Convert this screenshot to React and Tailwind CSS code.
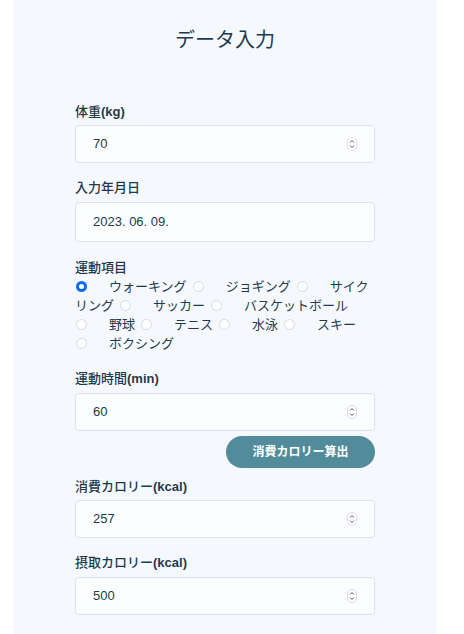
const sports = [
  "ウォーキング",
  "ジョギング",
  "サイクリング",
  "サッカー",
  "バスケットボール",
  "野球",
  "テニス",
  "水泳",
  "スキー",
  "ボクシング",
];

function Spinner() {
  return (
    <svg width="10" height="14" viewBox="0 0 10 14" className="shrink-0">
      <rect x="0.5" y="0.5" width="9" height="13" rx="4.5" fill="#fff" stroke="#d9dde2" />
      <path d="M3 5.5 L5 3.5 L7 5.5" fill="none" stroke="#555" strokeWidth="1" />
      <path d="M3 8.5 L5 10.5 L7 8.5" fill="none" stroke="#555" strokeWidth="1" />
    </svg>
  );
}

function Field({ value, spinner = true, h = "h-[38px]" }) {
  return (
    <div
      className={`flex items-center justify-between ${h} rounded-[4px] border border-[#dde3ea] bg-[#fcfdfe] pl-[17px] pr-[17px] text-[13px] text-[#223a4b]`}
    >
      <span>{value}</span>
      {spinner && <Spinner />}
    </div>
  );
}

function Label({ text, unit, className = "" }) {
  return (
    <div className={`text-[13px] leading-[19px] font-medium text-[#1f3a4c] ${className}`}>
      {text}
      {unit && <span className="font-bold">{unit}</span>}
    </div>
  );
}

export default function App() {
  return (
    <div
      className="min-h-[634px] bg-white"
      style={{ fontFamily: '"Liberation Sans", "Noto Sans CJK JP", sans-serif' }}
    >
      <div className="mx-[13px] w-[424px] min-h-[634px] bg-[#f5f9fe] px-[62px] pt-[26px]">
        <h1 className="text-center text-[20px] leading-[28px] text-[#1d3a4e]">データ入力</h1>

        <Label className="mt-[48px]" text="体重" unit="(kg)" />
        <div className="mt-[4px]">
          <Field value="70" />
        </div>

        <Label className="mt-[15px]" text="入力年月日" />
        <div className="mt-[5px]">
          <Field value="2023. 06. 09." spinner={false} h="h-[40px]" />
        </div>

        <Label className="mt-[16px]" text="運動項目" />
        <div className="text-[13px] leading-[19px] text-[#1f3a4c]">
          {sports.map((s, i) => (
            <span key={s}>
              <span
                className={`inline-block align-[-1px] ml-[1px] mr-[22px] h-[11px] w-[11px] rounded-full ${
                  i === 0
                    ? "border-[3px] border-[#0b6cf0] bg-white"
                    : "border border-[#d7dbe0] bg-white"
                }`}
              />
              {s}
              <span className="inline-block w-[5px]" />
            </span>
          ))}
        </div>

        <Label className="mt-[16px]" text="運動時間" unit="(min)" />
        <div className="mt-[5px]">
          <Field value="60" />
        </div>
        <div className="mt-[5px] flex justify-end">
          <button className="h-[32px] w-[149px] rounded-full bg-[#528c9a] text-[12px] font-bold text-white">
            消費カロリー算出
          </button>
        </div>

        <Label className="mt-[9px]" text="消費カロリー" unit="(kcal)" />
        <div className="mt-[4px]">
          <Field value="257" />
        </div>

        <Label className="mt-[15px]" text="摂取カロリー" unit="(kcal)" />
        <div className="mt-[5px]">
          <Field value="500" />
        </div>
      </div>
    </div>
  );
}
